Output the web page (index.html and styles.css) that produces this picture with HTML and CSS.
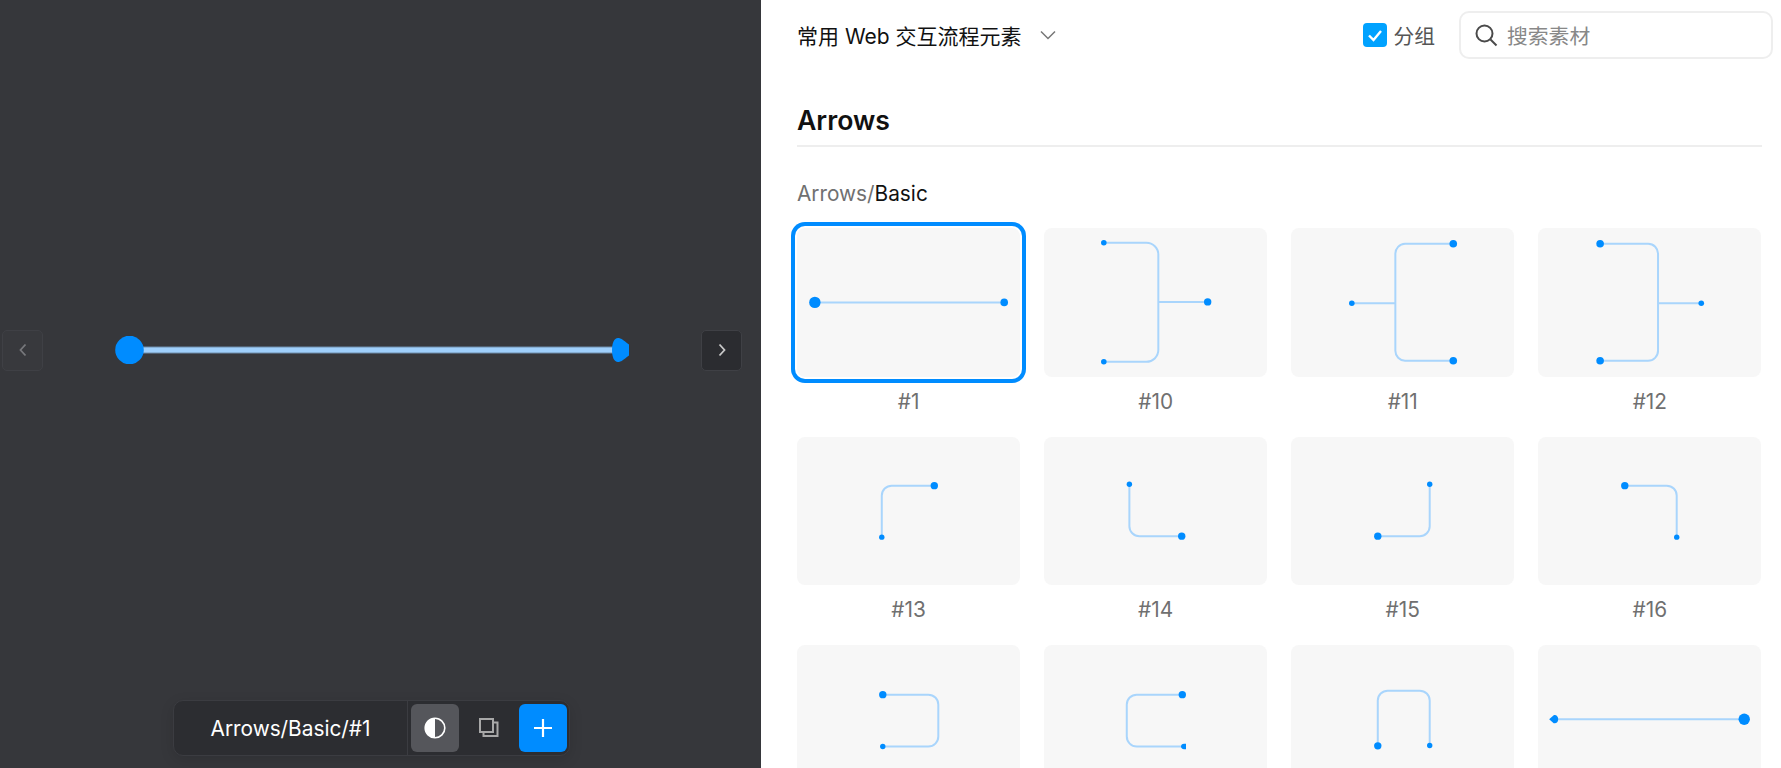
FILE: index.html
```html
<!DOCTYPE html>
<html lang="en">
<head>
    <meta charset="UTF-8">
    <meta name="viewport" content="width=device-width, initial-scale=1.0">
    <title>常用 Web 交互流程元素</title>
    <link rel="stylesheet" href="styles.css">
</head>
<body>

    <!-- Preview of the selected material -->
    <section class="preview">
        <div class="stage">
            <button class="nav-btn prev">
                <svg width="12" height="16" viewBox="0 0 12 16"><path d="M8.500 2.500 3.500 8l5 5.500"/></svg>
            </button>
            <svg class="preview-arrow" width="514" height="28" viewBox="0 0 514 28">
                <rect class="line-edge" x="24" y="10.500" width="478" height="7"/>
                <rect class="line-core" x="24" y="11.500" width="478" height="5"/>
                <circle class="dot" cx="14.500" cy="14" r="14.300"/>
                <path class="dot" d="M497 14C497 7 499 2 503 2C506 2 508 4 514 8.500V19.500C508 24 506 26 503 26C499 26 497 21 497 14Z"/>
            </svg>
            <button class="nav-btn next">
                <svg width="12" height="16" viewBox="0 0 12 16"><path d="M3.500 2.500 8.500 8l-5 5.500"/></svg>
            </button>
        </div>

        <div class="bar-wrap">
            <div class="bar">
                <div class="bar-name">Arrows/Basic/#1</div>
                <div class="bar-actions">
                    <button class="bar-btn active">
                        <svg width="24" height="24" viewBox="0 0 24 24">
                            <circle cx="12" cy="12" r="9.800" fill="none" stroke="#fff" stroke-width="1.600"/>
                            <path d="M12 2.200a9.800 9.800 0 0 0 0 19.600Z" fill="#fff"/>
                        </svg>
                    </button>
                    <button class="bar-btn copy">
                        <svg width="24" height="24" viewBox="0 0 24 24" fill="none" stroke="#a8a8a8" stroke-width="2">
                            <rect x="3" y="3" width="13" height="13"/>
                            <path d="M17 6.500H20.500V20H6.500V17"/>
                        </svg>
                    </button>
                    <button class="bar-btn add">
                        <svg width="24" height="24" viewBox="0 0 24 24" stroke="#fff" stroke-width="2.200"><path d="M12 3v18M3 12h18"/></svg>
                    </button>
                </div>
            </div>
        </div>
    </section>

    <!-- Material library -->
    <main class="library">
        <div class="toolbar">
            <div class="picker">
                <span>常用 Web 交互流程元素</span>
                <svg width="18" height="12" viewBox="0 0 18 12"><path d="M2 2.500 9 9.500l7-7"/></svg>
            </div>
            <div class="tools">
                <label class="group-check">
                    <span class="checkbox">
                        <svg width="24" height="24" viewBox="0 0 24 24"><path d="M6 12.500 10.500 17 18 8"/></svg>
                    </span>
                    分组
                </label>
                <div class="search">
                    <svg width="24" height="24" viewBox="0 0 24 24" fill="none" stroke="#4a4a4a" stroke-width="2">
                        <circle cx="10.500" cy="10.500" r="8"/>
                        <path d="M16.500 16.500 22.500 22.500"/>
                    </svg>
                    <span>搜索素材</span>
                </div>
            </div>
        </div>

        <h2>Arrows</h2>
        <div class="subtitle">Arrows/<b>Basic</b></div>

        <div class="grid">
            <div class="item selected">
                <div class="thumb">
                    <svg viewBox="0 0 223 149">
                        <path class="wire" d="M18 74.500H207"/>
                        <circle class="dot" cx="17.700" cy="74.500" r="5.700"/>
                        <circle class="dot" cx="207.300" cy="74.500" r="3.800"/>
                    </svg>
                </div>
                <div class="label">#1</div>
            </div>
            <div class="item">
                <div class="thumb">
                    <svg viewBox="0 0 223 149">
                        <path class="wire" d="M60 14.700H102A12 12 0 0 1 114.300 27V122A12 12 0 0 1 102 134H60M114.300 74H163"/>
                        <circle class="dot" cx="59.700" cy="14.700" r="2.800"/>
                        <circle class="dot" cx="59.700" cy="134" r="2.800"/>
                        <circle class="dot" cx="163.700" cy="74" r="3.700"/>
                    </svg>
                </div>
                <div class="label">#10</div>
            </div>
            <div class="item">
                <div class="thumb">
                    <svg viewBox="0 0 223 149">
                        <path class="wire" d="M162 15.700H114A10 10 0 0 0 104.300 26V123A10 10 0 0 0 114 133H162M104.300 75.300H61"/>
                        <circle class="dot" cx="162.300" cy="15.700" r="3.800"/>
                        <circle class="dot" cx="162.300" cy="133" r="3.800"/>
                        <circle class="dot" cx="60.700" cy="75.300" r="2.800"/>
                    </svg>
                </div>
                <div class="label">#11</div>
            </div>
            <div class="item">
                <div class="thumb">
                    <svg viewBox="0 0 223 149">
                        <path class="wire" d="M62 15.700H110A10 10 0 0 1 120 26V123A10 10 0 0 1 110 133H62M120 75.300H163"/>
                        <circle class="dot" cx="62" cy="15.700" r="3.800"/>
                        <circle class="dot" cx="62" cy="133" r="3.800"/>
                        <circle class="dot" cx="163.300" cy="75.300" r="2.800"/>
                    </svg>
                </div>
                <div class="label">#12</div>
            </div>
            <div class="item">
                <div class="thumb">
                    <svg viewBox="0 0 223 149">
                        <path class="wire" d="M137 48.700H94.700A10 10 0 0 0 84.700 58.700V100"/>
                        <circle class="dot" cx="137.300" cy="48.700" r="3.700"/>
                        <circle class="dot" cx="84.700" cy="100.300" r="2.700"/>
                    </svg>
                </div>
                <div class="label">#13</div>
            </div>
            <div class="item">
                <div class="thumb">
                    <svg viewBox="0 0 223 149">
                        <path class="wire" d="M85.300 48V89.300A10 10 0 0 0 95.300 99.300H137"/>
                        <circle class="dot" cx="85.300" cy="47.300" r="2.700"/>
                        <circle class="dot" cx="137.700" cy="99.300" r="3.700"/>
                    </svg>
                </div>
                <div class="label">#14</div>
            </div>
            <div class="item">
                <div class="thumb">
                    <svg viewBox="0 0 223 149">
                        <path class="wire" d="M138.700 48V89.300A10 10 0 0 1 128.700 99.300H87"/>
                        <circle class="dot" cx="138.700" cy="47.300" r="2.700"/>
                        <circle class="dot" cx="86.700" cy="99.300" r="3.700"/>
                    </svg>
                </div>
                <div class="label">#15</div>
            </div>
            <div class="item">
                <div class="thumb">
                    <svg viewBox="0 0 223 149">
                        <path class="wire" d="M87 48.700H128.700A10 10 0 0 1 138.700 58.700V100"/>
                        <circle class="dot" cx="86.700" cy="48.700" r="3.700"/>
                        <circle class="dot" cx="138.700" cy="100.300" r="2.700"/>
                    </svg>
                </div>
                <div class="label">#16</div>
            </div>
            <div class="item">
                <div class="thumb">
                    <svg viewBox="0 0 223 149">
                        <path class="wire" d="M86 49.700H131.300A10 10 0 0 1 141.300 59.700V91.700A10 10 0 0 1 131.300 101.700H86"/>
                        <circle class="dot" cx="85.700" cy="49.700" r="3.700"/>
                        <circle class="dot" cx="85.700" cy="101.700" r="2.700"/>
                    </svg>
                </div>
            </div>
            <div class="item">
                <div class="thumb">
                    <svg viewBox="0 0 223 149">
                        <path class="wire" d="M138 49.700H92.700A10 10 0 0 0 82.700 59.700V91.700A10 10 0 0 0 92.700 101.700H139"/>
                        <circle class="dot" cx="138.300" cy="49.700" r="3.700"/>
                        <path class="dot" d="M142 99V104.400H140C138 104.400 137 103 137 101.700S138 99 140 99Z"/>
                    </svg>
                </div>
            </div>
            <div class="item">
                <div class="thumb">
                    <svg viewBox="0 0 223 149">
                        <path class="wire" d="M86.700 101V55.700A10 10 0 0 1 96.700 45.700H128.700A10 10 0 0 1 138.700 55.700V100"/>
                        <circle class="dot" cx="86.700" cy="101" r="3.700"/>
                        <circle class="dot" cx="138.700" cy="100.700" r="2.700"/>
                    </svg>
                </div>
            </div>
            <div class="item">
                <div class="thumb">
                    <svg viewBox="0 0 223 149">
                        <path class="wire" d="M18 74.300H206"/>
                        <path class="dot" d="M11 74.300 15.500 70.300C18 69.500 20 71.500 20 74.300S18 79 15.500 78.300Z"/>
                        <circle class="dot" cx="206.300" cy="74.300" r="5.700"/>
                    </svg>
                </div>
            </div>
        </div>
    </main>

</body>
</html>
```

FILE: styles.css
```css
* {
    box-sizing: border-box;
}

body {
    display: flex;
    height: 100vh;
    margin: 0;
    overflow: hidden;
    font-family: Inter, "Noto Sans CJK SC", sans-serif;
    font-size: 20.800px;
    color: #111;
    background-color: #fff;
}

button {
    display: flex;
    align-items: center;
    justify-content: center;
    padding: 0;
    border: none;
    background: none;
}

/* Left side: preview */
.preview {
    display: flex;
    flex-direction: column;
    flex: 0 0 761px;
    background-color: #36373b;
}

.stage {
    display: flex;
    flex: 0 0 700px;
    align-items: center;
    gap: 72px;
    padding-left: 2px;
}

.nav-btn {
    width: 41px;
    height: 41px;
    border: 1px solid #3f4045;
    border-radius: 5px;
}

.nav-btn svg {
    fill: none;
    stroke-width: 1.800;
}

.prev {
    background-color: #38393d;
    stroke: #77787c;
}

.next {
    background-color: #2b2c30;
    stroke: #c8c8c8;
}

.preview-arrow {
    flex: none;
}

.line-edge {
    fill: #6d8cab;
}

.line-core {
    fill: #9fcffb;
}

.dot {
    fill: #008cff;
}

.bar-wrap {
    display: flex;
    justify-content: center;
    padding-right: 18px;
}

.bar {
    display: flex;
    width: 397px;
    height: 56px;
    border: 1px solid #3b3c41;
    border-radius: 10px;
    background-color: #2c2d31;
    box-shadow: 0 4px 14px rgba(0, 0, 0, 0.12);
}

.bar-name {
    flex: 0 0 234px;
    border-right: 1px solid #3b3c41;
    line-height: 56px;
    text-align: center;
    color: #fff;
}

.bar-actions {
    display: flex;
    flex: 1;
    align-items: center;
    padding-left: 3px;
}

.bar-btn {
    width: 48px;
    height: 48px;
    border-radius: 6px;
}

.bar-btn.active {
    background-color: #55565b;
}

.bar-btn.copy {
    width: 60px;
}

.bar-btn.add {
    background-color: #008cff;
}

/* Right side: library */
.library {
    flex: 1;
    min-width: 0;
    padding: 0 19px 0 36px;
}

.toolbar {
    display: flex;
    align-items: center;
    justify-content: space-between;
    height: 70px;
    margin-right: -11px;
}

.picker {
    display: flex;
    align-items: center;
    gap: 17px;
    font-size: 21px;
}

.picker svg {
    fill: none;
    stroke: #777;
    stroke-width: 1.500;
}

.tools {
    display: flex;
    align-items: center;
    gap: 24px;
}

.group-check {
    display: flex;
    align-items: center;
    gap: 6px;
    color: #555;
}

.checkbox {
    width: 24px;
    height: 24px;
    border-radius: 4px;
    background-color: #00a2ff;
}

.checkbox svg {
    display: block;
    fill: none;
    stroke: #fff;
    stroke-width: 2.400;
}

.search {
    display: flex;
    align-items: center;
    gap: 9px;
    width: 314px;
    height: 48px;
    padding-left: 13px;
    border: 2px solid #eee;
    border-radius: 10px;
    color: #888;
}

h2 {
    height: 77px;
    margin: 0;
    padding-top: 32px;
    border-bottom: 2px solid #eee;
    font-size: 26.600px;
    font-weight: 600;
    line-height: 36px;
}

.subtitle {
    height: 24px;
    margin: 35px 0 22px;
    line-height: 24px;
    color: #707070;
}

.subtitle b {
    font-weight: 400;
    color: #111;
}

.grid {
    display: grid;
    grid-template-columns: repeat(4, 223.100px);
    gap: 13.900px 24px;
}

.thumb {
    height: 148.800px;
    border-radius: 8px;
    background-color: #f7f7f7;
}

.thumb svg {
    display: block;
    width: 100%;
    height: 100%;
}

.selected .thumb {
    box-shadow: 0 0 0 2px #fff, 0 0 0 6px #008cff;
}

.wire {
    fill: none;
    stroke: #a9d5fc;
    stroke-width: 2;
}

.label {
    height: 46px;
    line-height: 50px;
    font-size: 20.800px;
    text-align: center;
    color: #707070;
}
```
